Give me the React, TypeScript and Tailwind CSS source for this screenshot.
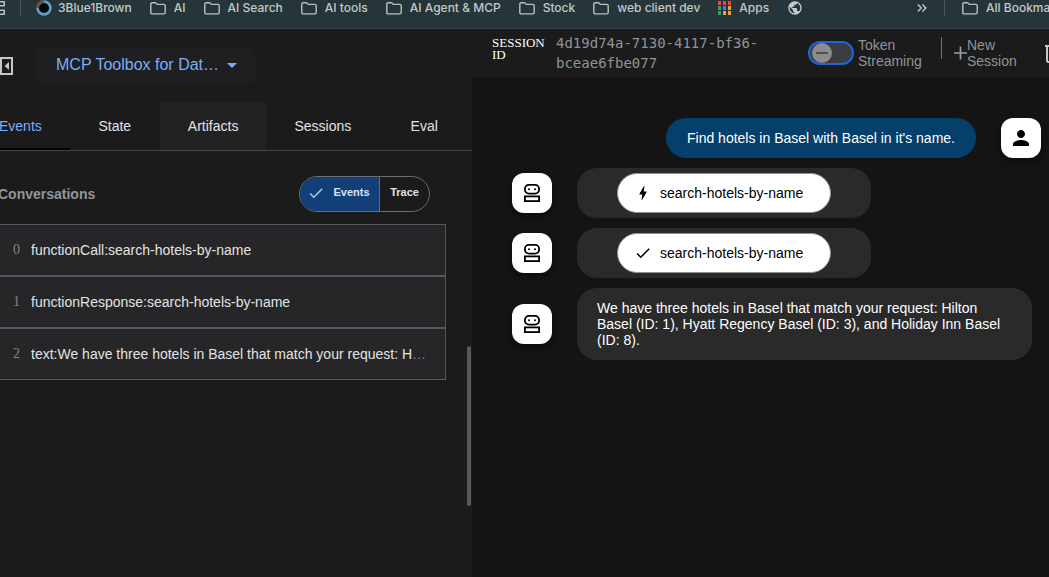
import React from "react";
import { MdPerson, MdBolt, MdCheck, MdArrowDropDown, MdPublic } from "react-icons/md";

const sans = "font-['Liberation_Sans',Arial,sans-serif]";

function Folder() {
  return (
    <svg viewBox="0 0 16 13" className="h-[13px] w-4 shrink-0" fill="none" stroke="#b9c1c0" strokeWidth="1.4">
      <path d="M.8 10.6V2.1c0-.8.5-1.3 1.3-1.3h3.2c.4 0 .7.1.9.4l1 1.2h6.7c.8 0 1.3.5 1.3 1.3v6.9c0 .8-.5 1.3-1.3 1.3H2.1c-.8 0-1.3-.5-1.3-1.3z" />
    </svg>
  );
}

function Bookmark({ label, icon }: { label: string; icon?: React.ReactNode }) {
  return (
    <a href="#" className="flex shrink-0 items-center gap-2 whitespace-nowrap">
      {icon ?? <Folder />}
      <span>{label}</span>
    </a>
  );
}

const appColors = ["#e8453c", "#e8453c", "#e8453c", "#34a060", "#3f7de8", "#f0a030", "#34a060", "#f0a030", "#f0a030"];

function BookmarksBar() {
  return (
    <nav
      aria-label="Bookmarks"
      className="flex h-[29px] shrink-0 items-center gap-[18px] overflow-hidden border-b border-[#3b4446] bg-[#253539] pb-3 font-[Inter,sans-serif] text-xs font-medium text-[#c3cac9]"
    >
      <div className="flex shrink-0 items-center gap-[15px]">
        <svg viewBox="0 0 5 14" className="h-3.5 w-[5px]" fill="none" stroke="#b9c1c0" strokeWidth="1.5">
          <path d="M0 .8h4.2v4H0M0 9.2h4.2v4H0" />
        </svg>
        <span className="h-4 w-px bg-[#45555a]" />
        <a href="#" className="flex shrink-0 items-center gap-1.5 whitespace-nowrap">
          <svg viewBox="0 0 16 16" className="h-4 w-4">
            <circle cx="8" cy="8" r="6.4" fill="#05080a" stroke="#5fa3c7" strokeWidth="2.6" />
            <path d="M1.6 8A6.4 6.4 0 0 1 8 1.6" fill="none" stroke="#7a4a2c" strokeWidth="2.6" />
          </svg>
          <span>3Blue1Brown</span>
        </a>
      </div>
      <Bookmark label="AI" />
      <Bookmark label="AI Search" />
      <Bookmark label="AI tools" />
      <Bookmark label="AI Agent & MCP" />
      <Bookmark label="Stock" />
      <Bookmark label="web client dev" />
      <Bookmark
        label="Apps"
        icon={
          <svg viewBox="0 0 13 14" className="h-3.5 w-[13px]">
            {appColors.map((c, i) => (
              <rect key={i} x={(i % 3) * 5} y={Math.floor(i / 3) * 5} width="3" height="4" fill={c} />
            ))}
          </svg>
        }
      />
      <MdPublic className="h-4 w-4 shrink-0" />
      <div className="ml-auto flex shrink-0 items-center gap-[17px]">
        <svg viewBox="0 0 10 8" className="h-2 w-2.5" fill="none" stroke="#c3cac9" strokeWidth="1.4">
          <path d="M.8.6 4.2 4 .8 7.4M5.4.6 8.8 4 5.4 7.4" />
        </svg>
        <span className="h-4 w-px bg-[#45555a]" />
        <div className="w-[87px] overflow-hidden">
          <Bookmark label="All Bookmarks" />
        </div>
      </div>
    </nav>
  );
}

const tabs = ["Events", "State", "Artifacts", "Sessions", "Eval"];
const tabStyles = [
  "-ml-[29px] border-black text-[#7cacf8]",
  "border-transparent text-[#e3e3e3]",
  "border-transparent bg-[#222222] text-[#e3e3e3]",
  "border-transparent text-[#e3e3e3]",
  "border-transparent text-[#e3e3e3]",
];

const events = [
  "functionCall:search-hotels-by-name",
  "functionResponse:search-hotels-by-name",
  "text:We have three hotels in Basel that match your request: Hilton Basel (ID: 1)",
];

function SidePanel() {
  return (
    <aside className="relative w-[472px] shrink-0 overflow-hidden bg-[#1b1b1b]">
      <div className="flex h-[73px] items-center gap-[23px]">
        <button aria-label="Close panel">
          <svg viewBox="0 0 13 18" className="h-[18px] w-[13px]" fill="none" stroke="#c4c7c5" strokeWidth="2">
            <path d="M0 1h12v16H0M1 1v16" />
            <path d="M9 5v8L4.500 9z" fill="#c4c7c5" stroke="none" />
          </svg>
        </button>
        <button
          aria-haspopup="listbox"
          className="mb-0.5 flex h-9 w-[220px] items-center justify-between rounded-lg bg-[#1f1f21] pr-3 pl-5 text-base whitespace-nowrap text-[#7cacf8]"
        >
          <span>MCP Toolbox for Dat…</span>
          <MdArrowDropDown className="h-6 w-6 shrink-0" />
        </button>
      </div>

      <div role="tablist" className="flex h-[49px] border-b border-[#444746] text-sm">
        {tabs.map((t, i) => (
          <button
            key={t}
            role="tab"
            aria-selected={i === 0}
            className={`min-w-[90px] shrink-0 border-b-2 px-7 pt-0.5 ${tabStyles[i]}`}
          >
            {t}
          </button>
        ))}
      </div>

      <div className="flex h-[73px] items-center justify-between pt-3 pr-[42px]">
        <h2 className="-ml-0.5 text-sm font-bold text-[#8f979c]">Conversations</h2>
        <div className="flex h-9 overflow-hidden rounded-full border border-[#6a6c6e] text-[11px] font-bold">
          <button
            aria-pressed="true"
            className="flex w-20 items-center justify-center gap-2 border-r border-[#6a6c6e] bg-[#133f78] pr-0.5 pb-0.5 text-[#d3e3fd]"
          >
            <MdCheck className="h-[18px] w-[18px] text-[#a9c7f5]" />
            Events
          </button>
          <button aria-pressed="false" className="w-[49px] pb-0.5 text-[#e3e3e3]">
            Trace
          </button>
        </div>
      </div>

      <ol className="mr-[26px] text-sm">
        {events.map((e, i) => (
          <li key={e}>
            <button className="flex h-[52px] w-full items-center gap-2.5 border border-l-0 border-[#54595e] bg-[#262628] pr-4 pl-[13px] text-left text-[#80868b]">
              <span className="w-2 shrink-0 font-['Liberation_Serif',serif]">{i}</span>
              <span className="truncate">
                <span className="text-[#e3e3e3]">{e}</span>
              </span>
            </button>
          </li>
        ))}
      </ol>
      <div className="absolute top-[317px] right-px h-40 w-1 rounded-full bg-[#54595e]" />
    </aside>
  );
}

function ChatHeader() {
  return (
    <header className="flex h-12 items-start overflow-hidden bg-[#1b1b1b] pl-5 text-sm leading-4 text-[#8f9499]">
      <div className="mt-2 w-16 shrink-0 font-['Liberation_Serif',serif] text-[13px] leading-3 text-white">SESSION ID</div>
      <div className="mt-1 w-[252px] shrink-0 font-['DejaVu_Sans_Mono',monospace] leading-5 text-[#8f9499]">
        4d19d74a-7130-4117-bf36-
        <br />
        bceae6fbe077
      </div>
      <div className="mt-2 flex shrink-0 items-center gap-1">
        <button
          id="streaming"
          role="switch"
          aria-checked="false"
          className="flex h-6 w-[46px] items-center rounded-full border-2 border-[#1b66d9] bg-[#3b3b40] pl-0.5"
        >
          <span className="flex h-5 w-5 items-center justify-center rounded-full bg-[#8c8c8d]">
            <span className="h-0.5 w-3 bg-[#4d4e50]" />
          </span>
        </button>
        <label htmlFor="streaming" className="w-[68px]">
          Token Streaming
        </label>
      </div>
      <span className="mt-2 ml-[15px] h-[22px] w-px shrink-0 bg-[#6f7173]" />
      <button className="mt-2 ml-[11px] flex shrink-0 items-center text-left">
        <svg viewBox="0 0 14 14" className="h-3.5 w-3.5" fill="none" stroke="#9a9fa4" strokeWidth="1.7">
          <path d="M7.500 .5v13M1 7h13" />
        </svg>
        <span className="w-[54px]">New Session</span>
      </button>
      <button aria-label="Delete session" className="mt-4 ml-auto shrink-0">
        <svg viewBox="0 0 4 18" className="h-[18px] w-1" fill="none" stroke="#c4c7c5" strokeWidth="2">
          <path d="M0 1h4M2 2v13.500q0 1.500 1.500 1.500H4" />
        </svg>
      </button>
    </header>
  );
}

function Avatar({ children }: { children: React.ReactNode }) {
  return (
    <div className="flex h-10 w-10 shrink-0 items-center justify-center rounded-xl bg-white text-black shadow-[0_3px_6px_rgba(0,0,0,0.45)]">
      {children}
    </div>
  );
}

function Robot() {
  return (
    <svg viewBox="0 0 24 24" className="h-6 w-6" fill="none" stroke="black" strokeWidth="1.8">
      <rect x="4.900" y="3.900" width="14.200" height="8.700" rx="4" />
      <rect x="4.900" y="15.400" width="14.200" height="4.700" />
      <circle cx="9" cy="8.200" r="1" fill="black" stroke="none" />
      <circle cx="15" cy="8.200" r="1" fill="black" stroke="none" />
    </svg>
  );
}

function BotRow({ children }: { children: React.ReactNode }) {
  return (
    <div className="flex items-center gap-[25px]">
      <Avatar>
        <Robot />
      </Avatar>
      {children}
    </div>
  );
}

function ToolMessage({ icon }: { icon: React.ReactNode }) {
  return (
    <div className="rounded-[20px] bg-[#2a2a2a] px-10 py-[5px]">
      <button className="flex h-10 w-[214px] items-center gap-2 rounded-full border border-[#8e9192] bg-white pl-4 text-black">
        {icon}
        search-hotels-by-name
      </button>
    </div>
  );
}

export default function App() {
  return (
    <div className={`flex min-h-screen flex-col bg-[#141414] ${sans}`}>
      <BookmarksBar />
      <div className="flex flex-1">
        <SidePanel />
        <main className="min-w-0 flex-1">
          <ChatHeader />
          <div className="flex flex-col gap-2.5 pt-[41px] pr-2 pl-10 text-sm leading-4 text-white">
            <div className="flex items-center justify-end gap-[25px]">
              <p className="rounded-[20px] bg-[#04406b] px-[21px] py-3">Find hotels in Basel with Basel in it's name.</p>
              <Avatar>
                <MdPerson className="h-6 w-6" />
              </Avatar>
            </div>
            <BotRow>
              <ToolMessage icon={<MdBolt className="h-[18px] w-[18px]" />} />
            </BotRow>
            <BotRow>
              <ToolMessage icon={<MdCheck className="h-[18px] w-[18px]" />} />
            </BotRow>
            <BotRow>
              <p className="mr-[9px] max-w-[455px] rounded-[20px] bg-[#2a2a2a] px-5 py-3">
                We have three hotels in Basel that match your request: Hilton Basel (ID: 1), Hyatt Regency Basel (ID: 3), and
                Holiday Inn Basel (ID: 8).
              </p>
            </BotRow>
          </div>
        </main>
      </div>
    </div>
  );
}
